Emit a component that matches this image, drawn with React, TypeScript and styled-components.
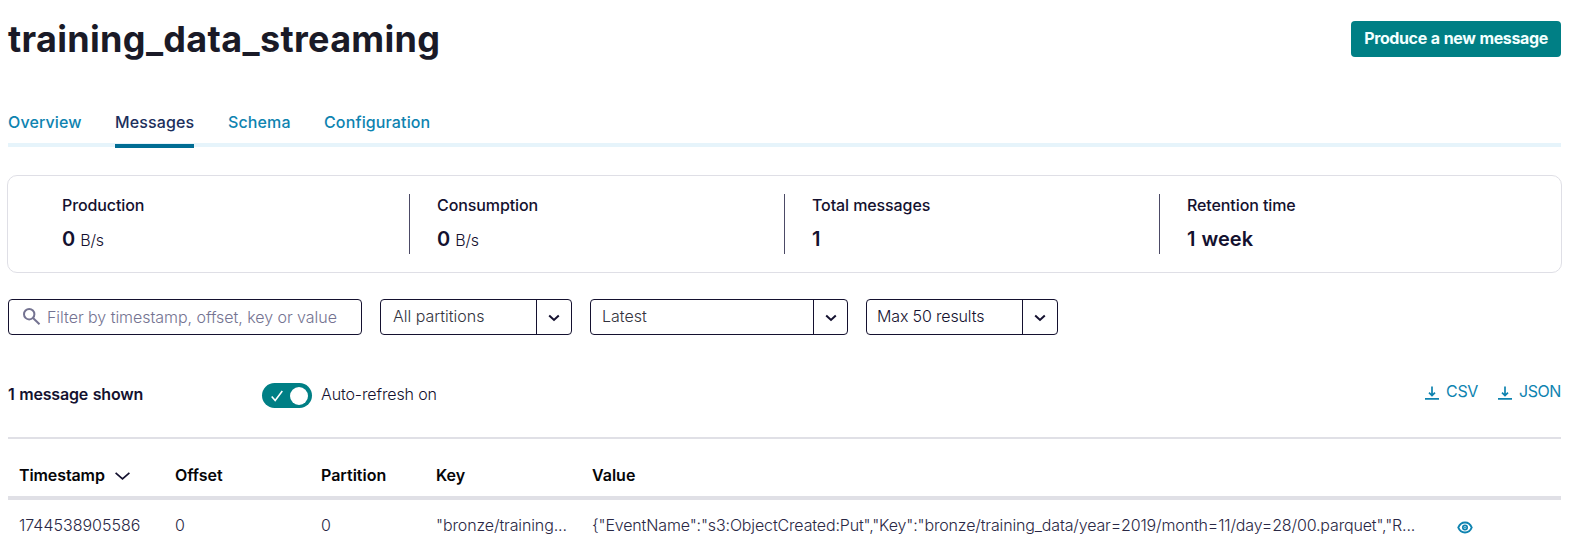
import React from "react";
import styled, { createGlobalStyle } from "styled-components";

const Global = createGlobalStyle`
  * { box-sizing: border-box; }
  body { margin: 0; background: #fff; color: #14112f; font: 400 16px/20px Inter, sans-serif; overflow: hidden; }
  button, input { font: inherit; }
  svg { display: block; flex: none; }
`;

const Page = styled.main`
  width: 1585px;
  height: 550px;
  padding: 0 24px 0 8px;
  overflow: hidden;
`;

const Header = styled.header`
  display: flex;
  justify-content: space-between;
  align-items: flex-start;
  height: 107px;
  padding-top: 21px;
`;

const Title = styled.h1`
  margin: -4px 0 0;
  font-size: 36px;
  line-height: 44px;
  font-weight: 700;
  letter-spacing: 0.32px;
  color: #1a1a27;
`;

const PrimaryButton = styled.button`
  width: 210px;
  height: 36px;
  padding: 0 0 2px;
  border: 0;
  border-radius: 4px;
  background: #007f85;
  color: #f2ffff;
  font-weight: 700;
  letter-spacing: -0.38px;
  word-spacing: 0.6px;
  white-space: nowrap;
`;

const Tabs = styled.nav`
  display: flex;
  gap: 34px;
  height: 40px;
  border-bottom: 4px solid #e6f4fb;
`;

const Tab = styled.a<{ $active?: boolean; $width: number }>`
  width: ${(p) => p.$width}px;
  height: 41px;
  padding-top: 5px;
  font-weight: 500;
  letter-spacing: 0.13px;
  white-space: nowrap;
  color: ${(p) => (p.$active ? "#1c2f5c" : "#0e83b0")};
  border-bottom: 4px solid ${(p) => (p.$active ? "#006d94" : "transparent")};
`;

const Stats = styled.section`
  display: flex;
  height: 98px;
  margin: 28px -1px 0;
  padding: 18px 0 0 27px;
  border: 1px solid #dfdfe6;
  border-radius: 10px;
`;

const Stat = styled.div`
  width: 375px;
  height: 60px;
  padding: 1px 0 0 27px;
  &:first-child { width: 374px; }
  & + & { border-left: 1px solid #4c4a66; }
`;

const StatLabel = styled.div`
  font-weight: 500;
  letter-spacing: -0.1px;
`;

const StatValue = styled.div`
  margin-top: 12px;
  font-size: 20px;
  line-height: 24px;
  font-weight: 600;
  word-spacing: 1px;
`;

const Unit = styled.span`
  margin-left: 5px;
  font-size: 16px;
  font-weight: 300;
  letter-spacing: -0.2px;
`;

const Filters = styled.div`
  display: flex;
  gap: 18px;
  margin-top: 26px;
`;

const Field = styled.div<{ $width: number }>`
  display: flex;
  width: ${(p) => p.$width}px;
  height: 36px;
  border: 1px solid #14112f;
  border-radius: 4px;
`;

const SearchInput = styled.input`
  flex: 1;
  min-width: 0;
  margin: 0 0 0 6px;
  padding: 0;
  border: 0;
  outline: 0;
  background: none;
  font-weight: 300;
  letter-spacing: -0.04px;
  &::placeholder { color: #747391; opacity: 1; }
`;

const SearchIcon = styled.svg`
  margin: 8px 0 0 14px;
`;

const SelectText = styled.span<{ $inset: number; $dark?: boolean }>`
  flex: 1;
  padding: 6px 0 0 ${(p) => p.$inset}px;
  font-weight: 300;
  letter-spacing: ${(p) => (p.$dark ? -0.15 : 0)}px;
  color: ${(p) => (p.$dark ? "#14112f" : "#33333d")};
`;

const SelectArrow = styled.span<{ $width: number }>`
  display: flex;
  align-items: center;
  justify-content: center;
  width: ${(p) => p.$width}px;
  padding-top: 1px;
  border-left: 1px solid #14112f;
`;

const Toolbar = styled.div`
  display: flex;
  height: 104px;
  padding-top: 48px;
  border-bottom: 2px solid #e0e0e6;
`;

const Count = styled.div`
  width: 254px;
  padding-top: 1px;
  font-weight: 600;
  letter-spacing: -0.18px;
  word-spacing: 0.8px;
`;

const Toggle = styled.span`
  display: flex;
  align-items: center;
  justify-content: space-between;
  width: 50px;
  height: 25px;
  padding: 0 4px 0 9px;
  border-radius: 13px;
  background: #007f85;
`;

const Knob = styled.i`
  width: 18px;
  height: 18px;
  border-radius: 50%;
  background: #fff;
`;

const ToggleLabel = styled.span`
  flex: 1;
  padding: 1px 0 0 9px;
  font-weight: 300;
  letter-spacing: -0.12px;
`;

const Download = styled.a`
  display: flex;
  gap: 7px;
  margin: -2px 0 0 20px;
  font-weight: 400;
  letter-spacing: -0.4px;
  color: #0e83b0;
`;

const DownloadIcon = styled.svg`
  margin-top: 5px;
`;

const Row = styled.div<{ $head?: boolean }>`
  display: grid;
  grid-template-columns: 156px 146px 115px 156px 865px 1fr;
  height: ${(p) => (p.$head ? 61 : 50)}px;
  padding: ${(p) => (p.$head ? 26 : 15)}px 0 0 11px;
  border-bottom: ${(p) => (p.$head ? "4px solid #e0e0e6" : "0")};
  font-weight: ${(p) => (p.$head ? 600 : 300)};
  color: ${(p) => (p.$head ? "#050508" : "#2a2845")};
`;

const Cell = styled.div<{ $spacing?: number }>`
  display: flex;
  align-items: flex-start;
  letter-spacing: ${(p) => p.$spacing ?? 0}px;
  white-space: nowrap;
`;

const SortIcon = styled.svg`
  margin: 7px 0 0 10px;
`;

const EyeIcon = styled.svg`
  margin: 6px 0 0 0;
`;

const Chevron = () => (
  <svg width="12" height="8" viewBox="0 0 12 8" fill="none" stroke="#14112f" strokeWidth="2">
    <path d="M1.2 1.5 6 6l4.8-4.5" />
  </svg>
);

type SelectProps = { label: string; width: number; arrow?: number; inset?: number; dark?: boolean };

const Select = ({ label, width, arrow = 35, inset = 12, dark }: SelectProps) => (
  <Field $width={width}>
    <SelectText $inset={inset} $dark={dark}>{label}</SelectText>
    <SelectArrow $width={arrow}>
      <Chevron />
    </SelectArrow>
  </Field>
);

const DownloadLink = ({ label }: { label: string }) => (
  <Download>
    <DownloadIcon width="14" height="14" viewBox="0 0 14 14" fill="none" stroke="#0e83b0" strokeWidth="1.7">
      <path d="M7 .5v8.800M4 6.600l3 2.900 3-2.900M0 12.800h14" />
    </DownloadIcon>
    {label}
  </Download>
);

const stats = [
  { label: "Production", value: "0", unit: "B/s" },
  { label: "Consumption", value: "0", unit: "B/s" },
  { label: "Total messages", value: "1" },
  { label: "Retention time", value: "1 week" },
];

export default function App() {
  return (
    <Page>
      <Global />
      <Header>
        <Title>training_data_streaming</Title>
        <PrimaryButton>Produce a new message</PrimaryButton>
      </Header>
      <Tabs>
        <Tab $width={73}>Overview</Tab>
        <Tab $width={79} $active>Messages</Tab>
        <Tab $width={62}>Schema</Tab>
        <Tab $width={106}>Configuration</Tab>
      </Tabs>
      <Stats>
        {stats.map((s) => (
          <Stat key={s.label}>
            <StatLabel>{s.label}</StatLabel>
            <StatValue>
              {s.value}
              {s.unit && <Unit>{s.unit}</Unit>}
            </StatValue>
          </Stat>
        ))}
      </Stats>
      <Filters>
        <Field $width={354}>
          <SearchIcon width="18" height="18" viewBox="0 0 18 18" fill="none" stroke="#747391" strokeWidth="2">
            <circle cx="6.2" cy="6.2" r="5.2" />
            <path d="m10 10 6.500 6.300" />
          </SearchIcon>
          <SearchInput placeholder="Filter by timestamp, offset, key or value" />
        </Field>
        <Select label="All partitions" width={192} />
        <Select label="Latest" width={258} arrow={34} inset={11} />
        <Select label="Max 50 results" width={192} inset={10} dark />
      </Filters>
      <Toolbar>
        <Count>1 message shown</Count>
        <Toggle>
          <svg width="12" height="12" viewBox="0 0 12 12" fill="none" stroke="#fff" strokeWidth="1.6">
            <path d="m.7 6.500 3.500 4L11.300 1" />
          </svg>
          <Knob />
        </Toggle>
        <ToggleLabel>Auto-refresh on</ToggleLabel>
        <DownloadLink label="CSV" />
        <DownloadLink label="JSON" />
      </Toolbar>
      <Row $head>
        <Cell $spacing={-0.1}>
          Timestamp
          <SortIcon width="15" height="8" viewBox="0 0 15 8" fill="none" stroke="#14112f" strokeWidth="1.7">
            <path d="m.6.8 6.900 6 6.900-6" />
          </SortIcon>
        </Cell>
        <Cell>Offset</Cell>
        <Cell>Partition</Cell>
        <Cell>Key</Cell>
        <Cell>Value</Cell>
      </Row>
      <Row>
        <Cell>1744538905586</Cell>
        <Cell>0</Cell>
        <Cell>0</Cell>
        <Cell $spacing={-0.12}>"bronze/training...</Cell>
        <Cell $spacing={-0.145}>{'{"EventName":"s3:ObjectCreated:Put","Key":"bronze/training_data/year=2019/month=11/day=28/00.parquet","R...'}</Cell>
        <Cell>
          <EyeIcon width="16" height="13" viewBox="0 0 16 13" fill="none" stroke="#0e83b0">
            <path strokeWidth="2" d="M1.300 6.500C2.600 3.200 5.100 1.500 8 1.500s5.400 1.700 6.700 5c-1.300 3.300-3.800 5-6.700 5s-5.400-1.700-6.700-5Z" />
            <circle cx="8" cy="6.500" r="2.200" strokeWidth="1.700" />
            <circle cx="8" cy="6.500" r=".7" fill="#0e83b0" strokeWidth=".5" />
          </EyeIcon>
        </Cell>
      </Row>
    </Page>
  );
}
